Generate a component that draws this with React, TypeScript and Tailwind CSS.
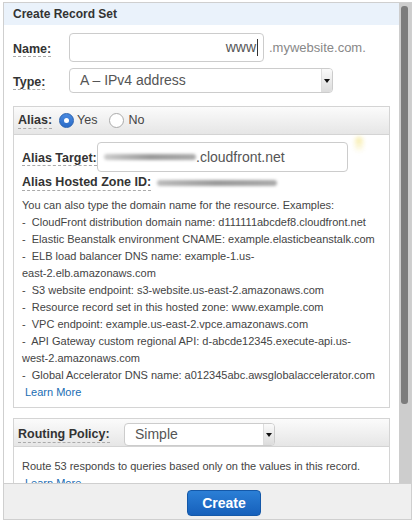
import { useState } from "react";

const font = "font-['Liberation_Sans',Arial,sans-serif]";

function Label({ children }: { children: React.ReactNode }) {
  return (
    <span className="whitespace-nowrap font-bold text-[12.5px] leading-[15px] text-[#333] border-b border-dashed border-[#aaa]">
      {children}
    </span>
  );
}

function SelectBox({ value, width }: { value: string; width: string }) {
  return (
    <div className={`${width} h-full flex items-stretch border border-[#ccc] rounded-[4px] bg-white overflow-hidden`}>
      <div className="flex-1 flex items-center pl-[10px] text-[14px] text-[#555]">{value}</div>
      <div className="w-[11px] flex items-center justify-center bg-gradient-to-b from-[#fafafa] to-[#dcdcdc] border-l border-[#ddd] shadow-[1px_1px_1px_#999]">
        <svg width="6" height="4" viewBox="0 0 6 4">
          <path d="M0 0h6L3 4z" fill="#111" />
        </svg>
      </div>
    </div>
  );
}

function Radio({ checked }: { checked?: boolean }) {
  return checked ? (
    <span className="w-[15px] h-[15px] rounded-full bg-gradient-to-b from-[#4a8ae0] to-[#2b6cc8] border border-[#2a62b0] flex items-center justify-center">
      <span className="w-[5px] h-[5px] rounded-full bg-white" />
    </span>
  ) : (
    <span className="w-[15px] h-[15px] rounded-full bg-white border border-[#aaa]" />
  );
}

const lines: string[] = [
  "You can also type the domain name for the resource. Examples:",
  "-  CloudFront distribution domain name: d111111abcdef8.cloudfront.net",
  "-  Elastic Beanstalk environment CNAME: example.elasticbeanstalk.com",
  "-  ELB load balancer DNS name: example-1.us-",
  "east-2.elb.amazonaws.com",
  "-  S3 website endpoint: s3-website.us-east-2.amazonaws.com",
  "-  Resource record set in this hosted zone: www.example.com",
  "-  VPC endpoint: example.us-east-2.vpce.amazonaws.com",
  "-  API Gateway custom regional API: d-abcde12345.execute-api.us-",
  "west-2.amazonaws.com",
  "-  Global Accelerator DNS name: a012345abc.awsglobalaccelerator.com",
];

export default function App() {
  const [alias, setAlias] = useState(true);

  return (
    <div className={`${font} ml-[3px] mt-[2px] w-[409px] h-[518px] border border-[#cfcfcf] flex flex-col bg-white`}>
      <div className="h-[480px] flex overflow-hidden">
        <div className="flex-1 overflow-hidden">
          <div className="h-[22px] bg-[#eaf2fb] pl-[9px] flex items-center text-[12px] font-bold text-[#333]">
            Create Record Set
          </div>

          <div className="px-[9px]">
            {/* Name */}
            <div className="mt-[8px] h-[29px] flex items-center">
              <div className="w-[56px]"><Label>Name:</Label></div>
              <div className="w-[195px] h-full border border-[#ccc] rounded-[4px] flex items-center justify-end pr-[5px] text-[14px] text-[#555]">
                www<span className="w-px h-[17px] bg-[#333] ml-[1px]" />
              </div>
              <span className="ml-[5px] text-[13px] text-[#888]">.mywebsite.com.</span>
            </div>

            {/* Type */}
            <div className="mt-[6px] h-[25px] flex items-center">
              <div className="w-[56px]"><Label>Type:</Label></div>
              <SelectBox value="A – IPv4 address" width="w-[264px]" />
            </div>

            {/* Alias box */}
            <div className="mt-[13px] border border-[#d4d4d4] relative">
              <div className="h-[28px] bg-gradient-to-b from-[#fbfbfb] to-[#e6e6e6] border-b border-[#d4d4d4] flex items-center pl-[4px] gap-[6px] text-[#444]">
                <Label>Alias:</Label>
                <button className="flex items-center gap-[3px] ml-[1px]" onClick={() => setAlias(true)}>
                  <Radio checked={alias} />
                  <span className="text-[12.5px]">Yes</span>
                </button>
                <button className="flex items-center gap-[4px] ml-[6px]" onClick={() => setAlias(false)}>
                  <Radio checked={!alias} />
                  <span className="text-[12.5px]">No</span>
                </button>
              </div>
              <span className="absolute left-[341px] top-[30px] w-[8px] h-[16px] rounded-full bg-gradient-to-b from-[#f3e27a] to-white/0 opacity-70 blur-[2px]" />

              <div className="pl-[8px] pr-[6px] pt-[7px] pb-[6px]">
                <div className="h-[30px] flex items-center">
                  <div className="w-[75px]"><Label>Alias Target:</Label></div>
                  <div className="w-[251px] h-full border border-[#ccc] rounded-[4px] flex items-center pl-[6px] text-[14px] text-[#555]">
                    <span className="w-[92px] h-[6px] bg-gradient-to-r from-[#ccc] via-[#999] to-[#aaa] blur-[1.5px] rounded-full" />
                    <span>.cloudfront.net</span>
                  </div>
                </div>
                <div className="mt-[3px] h-[16px] flex items-center">
                  <Label>Alias Hosted Zone ID:</Label>
                  <span className="ml-[6px] w-[120px] h-[6px] bg-gradient-to-r from-[#bbb] via-[#999] to-[#aaa] blur-[1.5px] rounded-full" />
                </div>
                <div className="mt-[6px] text-[11px] leading-[17px] text-[#444] whitespace-pre">
                  {lines.map((l) => (
                    <div key={l}>{l}</div>
                  ))}
                  <a className="block pl-[3px] text-[#1a6db3]" href="#">Learn More</a>
                </div>
              </div>
            </div>

            {/* Routing policy */}
            <div className="mt-[10px] border border-[#d4d4d4]">
              <div className="h-[28px] bg-gradient-to-b from-[#fbfbfb] to-[#e6e6e6] border-b border-[#d4d4d4] flex items-end pl-[4px]">
                <div className="w-[106px] h-[23px] flex items-center"><Label>Routing Policy:</Label></div>
                <div className="h-[23px]">
                  <SelectBox value="Simple" width="w-[151px]" />
                </div>
              </div>
              <div className="pl-[8px] pt-[11px] text-[11px] leading-[17px] text-[#444]">
                <div>Route 53 responds to queries based only on the values in this record.</div>
                <a className="block pl-[3px] text-[#1a6db3]" href="#">Learn More</a>
              </div>
            </div>
          </div>
        </div>

        {/* scrollbar */}
        <div className="w-[12px] bg-[#cdcdcd] pt-[3px] pl-[2px] pr-[3px]">
          <div className="h-[398px] bg-[#7c7c7c] rounded-[3px]" />
        </div>
      </div>

      <div className="flex-1 bg-[#efefef] border-t border-[#cfcfcf] pl-[183px] pt-[6px]">
        <button className="w-[74px] h-[26px] rounded-[4px] bg-gradient-to-b from-[#2b7fd6] to-[#1660bb] border border-[#1458a8] text-white font-bold text-[14px]">
          Create
        </button>
      </div>
    </div>
  );
}
